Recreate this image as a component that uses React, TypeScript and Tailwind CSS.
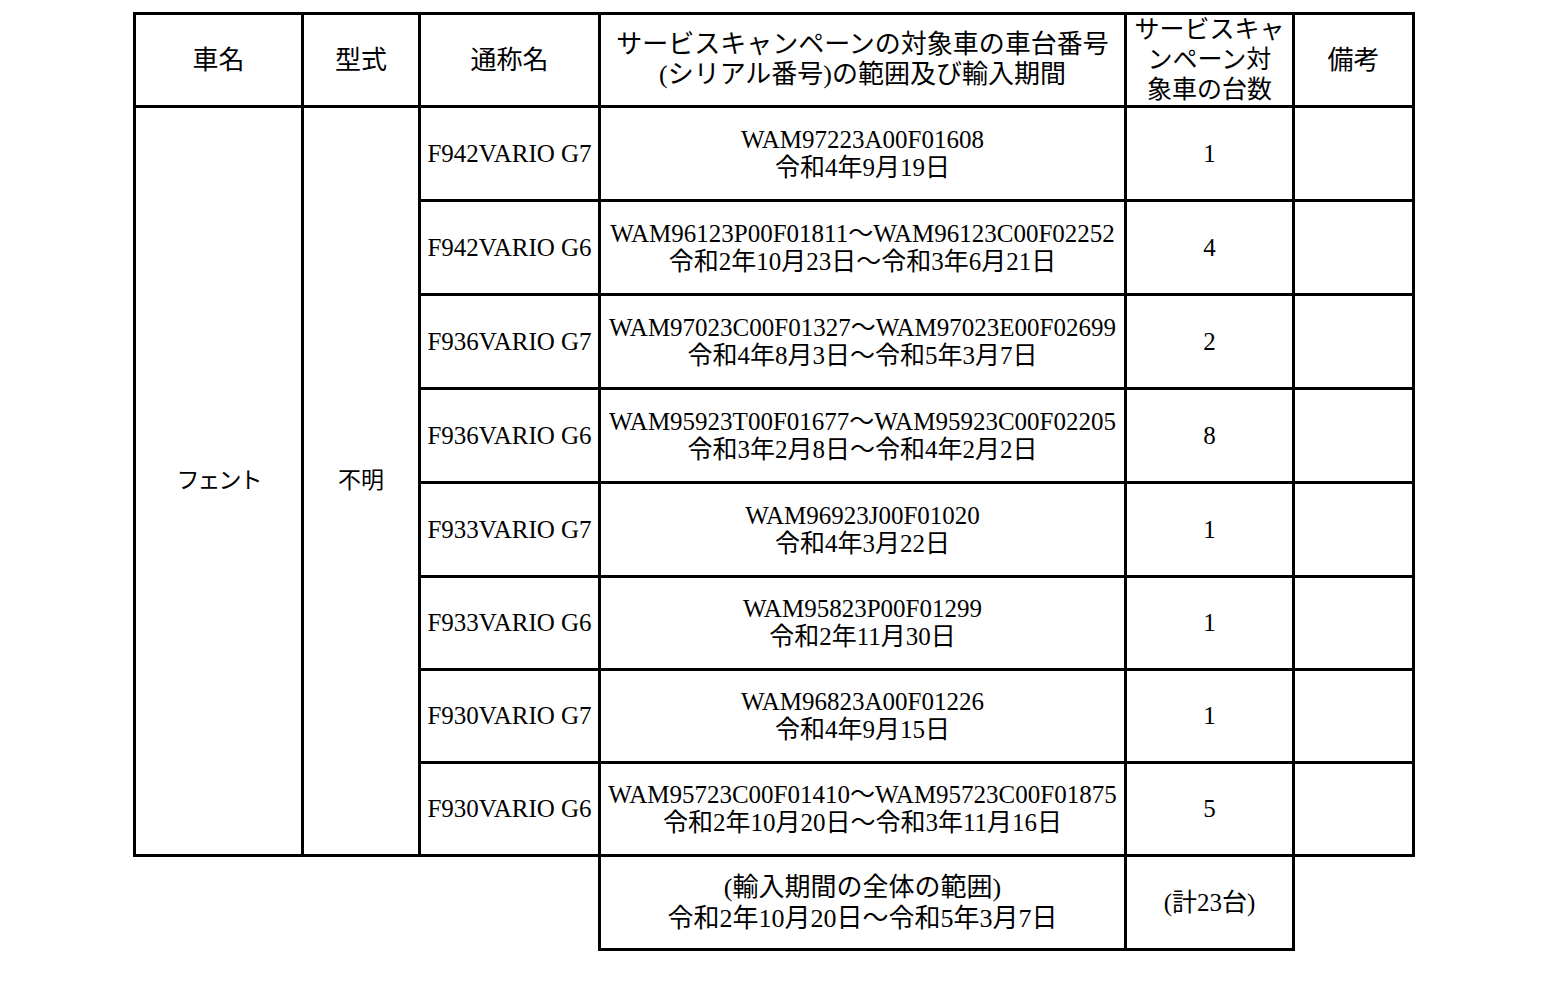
import React from 'react';

type Row = {
  model: string;
  serial: string;
  period: string;
  count: string;
};

const rows: Row[] = [
  { model: 'F942VARIO G7', serial: 'WAM97223A00F01608', period: '令和4年9月19日', count: '1' },
  { model: 'F942VARIO G6', serial: 'WAM96123P00F01811～WAM96123C00F02252', period: '令和2年10月23日～令和3年6月21日', count: '4' },
  { model: 'F936VARIO G7', serial: 'WAM97023C00F01327～WAM97023E00F02699', period: '令和4年8月3日～令和5年3月7日', count: '2' },
  { model: 'F936VARIO G6', serial: 'WAM95923T00F01677～WAM95923C00F02205', period: '令和3年2月8日～令和4年2月2日', count: '8' },
  { model: 'F933VARIO G7', serial: 'WAM96923J00F01020', period: '令和4年3月22日', count: '1' },
  { model: 'F933VARIO G6', serial: 'WAM95823P00F01299', period: '令和2年11月30日', count: '1' },
  { model: 'F930VARIO G7', serial: 'WAM96823A00F01226', period: '令和4年9月15日', count: '1' },
  { model: 'F930VARIO G6', serial: 'WAM95723C00F01410～WAM95723C00F01875', period: '令和2年10月20日～令和3年11月16日', count: '5' },
];

const cell = 'border-[3px] border-black text-center align-middle p-0';

export default function App() {
  return (
    <div
      className="min-h-[995px] bg-white text-black pt-[12px] pl-[133px]"
      style={{ fontFamily: '"Liberation Serif", "Noto Sans CJK JP", serif' }}
    >
      <table className="table-fixed border-collapse w-[1282px]">
        <colgroup>
          <col className="w-[168px]" />
          <col className="w-[117px]" />
          <col className="w-[180px]" />
          <col className="w-[526px]" />
          <col className="w-[168px]" />
          <col className="w-[120px]" />
        </colgroup>
        <thead>
          <tr className="h-[92px]">
            <th className={`${cell} font-normal text-[26px]`}>車名</th>
            <th className={`${cell} font-normal text-[26px]`}>型式</th>
            <th className={`${cell} font-normal text-[26px]`}>通称名</th>
            <th className={`${cell} font-normal text-[26px] leading-[30px]`}>
              サービスキャンペーンの対象車の車台番号
              <br />
              (シリアル番号)の範囲及び輸入期間
            </th>
            <th className={`${cell} font-normal text-[25px] leading-[30px]`}>
              サービスキャ
              <br />
              ンペーン対
              <br />
              象車の台数
            </th>
            <th className={`${cell} font-normal text-[26px]`}>備考</th>
          </tr>
        </thead>
        <tbody>
          {rows.map((r, i) => (
            <tr key={r.model} className={i < 5 ? 'h-[94px]' : 'h-[93px]'}>
              {i === 0 && (
                <>
                  <td rowSpan={rows.length} className={`${cell} text-[23px] tracking-[-2px]`}>
                    フェント
                  </td>
                  <td rowSpan={rows.length} className={`${cell} text-[23px]`}>
                    不明
                  </td>
                </>
              )}
              <td className={`${cell} text-[25px] whitespace-nowrap`}>{r.model}</td>
              <td className={`${cell} text-[25px] leading-[28px] whitespace-nowrap`}>
                {r.serial}
                <br />
                {r.period}
              </td>
              <td className={`${cell} text-[25px]`}>{r.count}</td>
              <td className={cell}></td>
            </tr>
          ))}
          <tr className="h-[94px]">
            <td className="p-0" colSpan={3}></td>
            <td className={`${cell} text-[26px] leading-[31px]`}>
              (輸入期間の全体の範囲)
              <br />
              令和2年10月20日～令和5年3月7日
            </td>
            <td className={`${cell} text-[25px]`}>(計23台)</td>
            <td className="p-0"></td>
          </tr>
        </tbody>
      </table>
    </div>
  );
}
